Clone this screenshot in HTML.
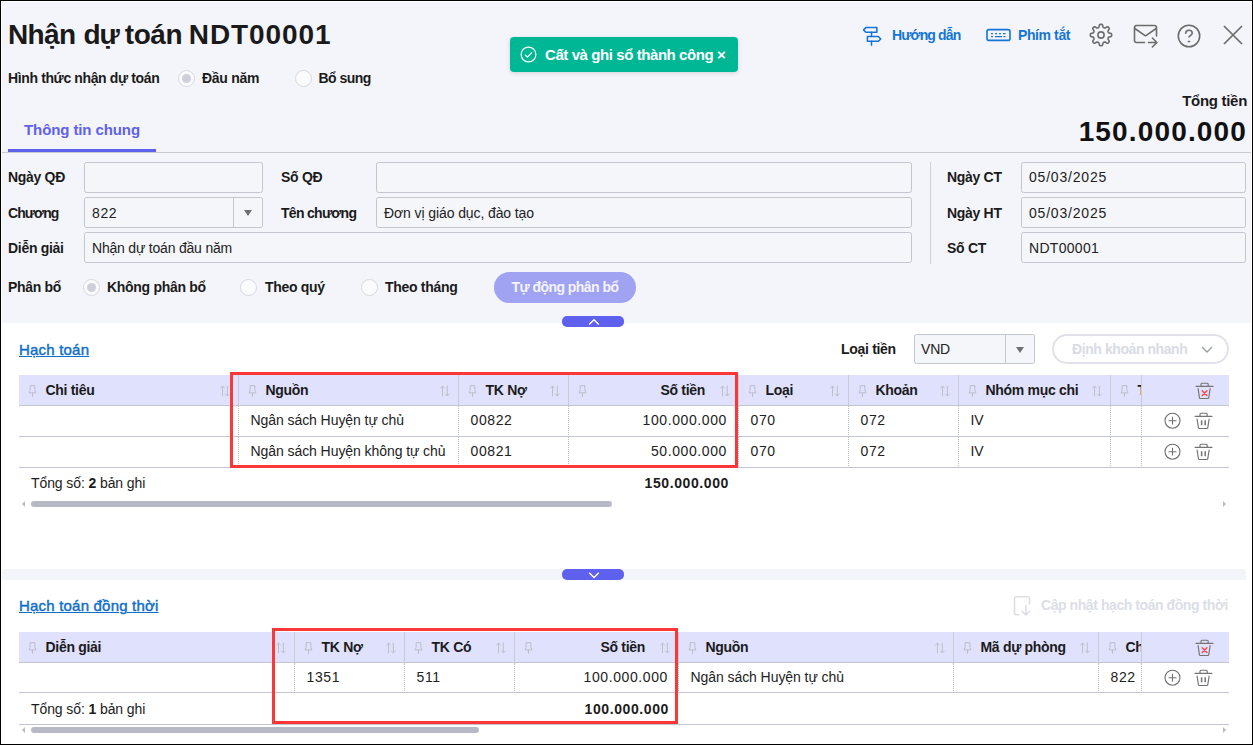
<!DOCTYPE html>
<html lang="vi">
<head>
<meta charset="utf-8">
<title>Nhận dự toán NDT00001</title>
<style>
*{box-sizing:border-box;margin:0;padding:0}
html,body{width:1253px;height:745px;overflow:hidden}
body{font-family:"Liberation Sans",sans-serif;font-size:14px;color:#1b1b1b;background:#fff;position:relative}
.abs{position:absolute}
#frame{position:absolute;left:0;top:0;width:1253px;height:745px;border:1px solid #000;z-index:50;pointer-events:none}
#top{position:absolute;left:2px;top:2px;width:1249px;height:321px;background:#f4f5fa}
.title{position:absolute;left:8px;top:18px;font-size:28px;font-weight:700;line-height:34px;color:#1a1a1a;white-space:nowrap;letter-spacing:-0.12px}
.lbl{position:absolute;font-weight:700;font-size:14px;line-height:18px;white-space:nowrap;color:#1b1b1b;letter-spacing:-.3px}
.radio{position:absolute;width:17px;height:17px;border-radius:50%;border:1px solid #d6d8e0;background:#fbfbfd}
.radio.on::after{content:"";position:absolute;left:3px;top:3px;width:9px;height:9px;border-radius:50%;background:#cdcfda}
.inp{position:absolute;height:31px;border:1px solid #c3c5cf;border-radius:2.500px;background:#f5f6fa;font-size:14px;line-height:29px;padding-left:7px;color:#222;white-space:nowrap;letter-spacing:-.2px}
.n{letter-spacing:.6px}
.tab{position:absolute;left:8px;top:119px;width:148px;height:33px;border-bottom:3px solid #5e60ee;color:#5e60ee;font-weight:700;font-size:15px;line-height:22px;text-align:center;letter-spacing:-.1px}
.title span{position:absolute;top:0}
.hline{position:absolute;left:2px;top:152px;width:1249px;height:1px;background:#c9cad3}
.link{position:absolute;color:#116fca;font-weight:400;-webkit-text-stroke:.45px #116fca;font-size:15px;text-decoration:underline;text-decoration-thickness:1.300px;text-underline-offset:1.200px;white-space:nowrap;line-height:20px;letter-spacing:.2px}
.handle{position:absolute;left:562px;width:62px;height:11px;background:#5e60ee;border-radius:5px}
.handle svg{position:absolute;left:26px;top:1.500px}
.strip{position:absolute;left:2px;top:569px;width:1244px;height:11px;background:#f4f5fa;border-radius:2px}
.grid{position:absolute;left:19px;width:1210px;overflow:hidden}
.hd{position:absolute;top:0;height:30px;background:#e0e1fd;border-right:1px solid #c9cad6;font-weight:700;font-size:14px;line-height:30px;white-space:nowrap;overflow:hidden;letter-spacing:-.3px}
.hd .pin{position:absolute;left:9px;top:9.500px}
.hd .srt{position:absolute;right:8px;top:10px}
.hd span.t{position:absolute;left:27px}
.hd span.r{position:absolute;right:33px}
.cell{position:absolute;height:31px;line-height:29px;font-size:14px;white-space:nowrap;padding-left:11.5px;border-right:1px dotted #b9bbc4;border-bottom:1px solid #c3c6d1;letter-spacing:-.07px;color:#222}
.cell.num{text-align:right;padding-right:11px}
.cell.n,.foot.n{letter-spacing:.6px}
.rowline{position:absolute;left:0;width:1210px;height:1px;background:#c3c6d1}
.foot{position:absolute;font-size:14px;line-height:30px;white-space:nowrap;letter-spacing:-.1px}
.sb{position:absolute;height:6px;border-radius:3px;background:#b7bac6}
.red{position:absolute;border:3px solid #fb3737;z-index:10}
.toast{position:absolute;left:510px;top:37px;width:228px;height:35px;background:#00b795;border-radius:4px;box-shadow:0 1px 4px rgba(0,0,0,.15);color:#fff;font-weight:700;font-size:15px;line-height:35px;white-space:nowrap;z-index:20}
.toast svg{position:absolute;left:10px;top:9px}
.toast span{position:absolute;left:35px;top:0;letter-spacing:-.42px}
.hlink{position:absolute;color:#1575d6;font-weight:700;font-size:14px;line-height:18px;white-space:nowrap;letter-spacing:-.4px}
.total{position:absolute;right:6px;top:115px;font-size:28px;font-weight:700;line-height:34px;letter-spacing:1.15px;color:#111;white-space:nowrap}
.dd{position:absolute;right:0;top:0;width:29px;height:100%;border-left:1px solid #c3c5cf}
.dd::after{content:"";position:absolute;left:9.500px;top:12px;border:4.500px solid transparent;border-top:6px solid #707070;border-bottom:0}
.btn{position:absolute;left:494px;top:272px;width:142px;height:31px;border-radius:16px;background:#a0a2f2;color:#f4f4ff;font-weight:700;font-size:14px;line-height:30px;text-align:center;letter-spacing:-.55px}
.pill{position:absolute;left:1052px;top:334px;width:177px;height:30px;border-radius:15px;border:2px solid #e1e2e9;background:#fff;color:#d9dbe3;font-weight:700;font-size:14px;line-height:26px;padding-left:18px;white-space:nowrap;letter-spacing:-.42px}
.pill svg{position:absolute;right:14px;top:10px}
.arrl{position:absolute;width:0;height:0;border:3px solid transparent;border-right:3.500px solid #b7bac6;border-left:0}
.arrr{position:absolute;width:0;height:0;border:3px solid transparent;border-left:3.500px solid #b7bac6;border-right:0}
</style>
</head>
<body>
<div id="frame"></div>
<div id="top"></div>
<div class="title"><span style="left:0;letter-spacing:-.67px">Nhận </span><span style="left:75.500px;letter-spacing:-1px">dự </span><span style="left:116.800px;letter-spacing:-.45px">toán </span><span style="left:180.800px;letter-spacing:.9px">NDT00001</span></div>
<div class="toast"><svg width="17" height="17" viewBox="0 0 17 17" fill="none" stroke="#fff" stroke-width="1.200"><circle cx="8.5" cy="8.5" r="7.400"/><path d="M5 8.800l2.400 2.300 4.600-4.800"/></svg><span>Cất và ghi sổ thành công ×</span></div>
<svg class="abs" style="left:862px;top:26px" width="20" height="21" viewBox="0 0 20 21" fill="none" stroke="#1274d6" stroke-width="1.500" stroke-linejoin="round" stroke-linecap="round"><path d="M1.600 3.900L3.900 1.600H14.900V6.200H3.900z"/><path d="M5.400 10.600H16.400L18.700 12.950L16.400 15.300H5.400z"/><path d="M9.500 6.200v4.400M9.500 15.300v4"/></svg>
<div class="hlink" style="left:892px;top:26px;letter-spacing:-.85px">Hướng dẫn</div>
<svg class="abs" style="left:986px;top:28px" width="25" height="14" viewBox="0 0 25 14" fill="none" stroke="#1575d6" stroke-width="1.600"><rect x="1" y="1.600" width="23" height="10.800" rx="2"/><path d="M5 5.600h2M9 5.600h2M13 5.600h2M17 5.600h2.500M5 8.600h2M9 8.600h7M17.500 8.600h2" stroke-width="1.400"/></svg>
<div class="hlink" style="left:1018px;top:26px">Phím tắt</div>
<svg class="abs" style="left:1089px;top:23px" width="24" height="24" viewBox="0 0 24 24" fill="none" stroke="#6c6c6c" stroke-width="1.600" stroke-linejoin="round"><circle cx="12" cy="12" r="3.100"/><path d="M12.00 1.30L12.56 1.34L13.10 1.50L13.58 2.05L13.86 3.26L14.10 4.17L14.43 4.52L14.80 4.71L15.17 4.87L15.57 5.00L16.05 4.98L16.87 4.50L17.92 3.85L18.65 3.79L19.15 4.06L19.57 4.43L19.94 4.85L20.21 5.35L20.15 6.08L19.50 7.13L19.02 7.95L19.00 8.43L19.13 8.83L19.29 9.20L19.48 9.57L19.83 9.90L20.74 10.14L21.95 10.42L22.50 10.90L22.66 11.44L22.70 12.00L22.66 12.56L22.50 13.10L21.95 13.58L20.74 13.86L19.83 14.10L19.48 14.43L19.29 14.80L19.13 15.17L19.00 15.57L19.02 16.05L19.50 16.87L20.15 17.92L20.21 18.65L19.94 19.15L19.57 19.57L19.15 19.94L18.65 20.21L17.92 20.15L16.87 19.50L16.05 19.02L15.57 19.00L15.17 19.13L14.80 19.29L14.43 19.48L14.10 19.83L13.86 20.74L13.58 21.95L13.10 22.50L12.56 22.66L12.00 22.70L11.44 22.66L10.90 22.50L10.42 21.95L10.14 20.74L9.90 19.83L9.57 19.48L9.20 19.29L8.83 19.13L8.43 19.00L7.95 19.02L7.13 19.50L6.08 20.15L5.35 20.21L4.85 19.94L4.43 19.57L4.06 19.15L3.79 18.65L3.85 17.92L4.50 16.87L4.98 16.05L5.00 15.57L4.87 15.17L4.71 14.80L4.52 14.43L4.17 14.10L3.26 13.86L2.05 13.58L1.50 13.10L1.34 12.56L1.30 12.00L1.34 11.44L1.50 10.90L2.05 10.42L3.26 10.14L4.17 9.90L4.52 9.57L4.71 9.20L4.87 8.83L5.00 8.43L4.98 7.95L4.50 7.13L3.85 6.08L3.79 5.35L4.06 4.85L4.43 4.43L4.85 4.06L5.35 3.79L6.08 3.85L7.13 4.50L7.95 4.98L8.43 5.00L8.83 4.87L9.20 4.71L9.57 4.52L9.90 4.17L10.14 3.26L10.42 2.05L10.90 1.50L11.44 1.34z"/></svg>
<svg class="abs" style="left:1132.600px;top:24px" width="26" height="24" viewBox="0 0 26 24" fill="none" stroke="#6c6c6c" stroke-width="1.600" stroke-linejoin="round" stroke-linecap="round"><path d="M11.500 18.500H3.500a2 2 0 0 1-2-2V3.500a2 2 0 0 1 2-2h18a2 2 0 0 1 2 2V12"/><path d="M1.800 4.500l10.700 7.300L23.200 4.500"/><path d="M15.500 18.500h8.300M19.400 14l4.500 4.500L19.400 23"/></svg>
<svg class="abs" style="left:1177px;top:24px" width="24" height="24" viewBox="0 0 24 24" fill="none" stroke="#6c6c6c" stroke-width="1.600" stroke-linecap="round"><circle cx="12" cy="12" r="10.700"/><path d="M8.700 9.300c0-1.800 1.500-3 3.300-3s3.200 1.100 3.200 2.800c0 2-2.300 2.500-3.200 3.800"/><path d="M11.300 17.600h1.400" stroke-width="1.500"/></svg>
<svg class="abs" style="left:1223px;top:25px" width="20" height="20" viewBox="0 0 20 20" fill="none" stroke="#6c6c6c" stroke-width="1.700"><path d="M1 1l18 18M19 1L1 19"/></svg>
<div class="lbl" style="left:8px;top:69px;letter-spacing:-.37px">Hình thức nhận dự toán</div>
<div class="radio on" style="left:178px;top:70px"></div>
<div class="lbl" style="left:202px;top:69px">Đầu năm</div>
<div class="radio" style="left:294.500px;top:70px"></div>
<div class="lbl" style="left:318.500px;top:69px;letter-spacing:-.55px">Bổ sung</div>
<div class="lbl" style="right:6px;top:92px;font-size:15px">Tổng tiền</div>
<div class="total">150.000.000</div>
<div class="tab">Thông tin chung</div><div class="hline"></div>
<div class="lbl" style="left:8px;top:168px">Ngày QĐ</div><div class="inp" style="left:84px;top:162px;width:179px"></div>
<div class="lbl" style="left:281px;top:168px">Số QĐ</div><div class="inp" style="left:376px;top:162px;width:536px"></div>
<div class="lbl" style="left:8px;top:204px;letter-spacing:-.9px">Chương</div><div class="inp n" style="left:84px;top:197px;padding-top:1px;width:179px">822<div class="dd"></div></div>
<div class="lbl" style="left:281px;top:204px;letter-spacing:-.7px">Tên chương</div><div class="inp" style="left:376px;top:197px;padding-top:1px;width:536px;letter-spacing:-.1px">Đơn vị giáo dục, đào tạo</div>
<div class="lbl" style="left:8px;top:239px">Diễn giải</div><div class="inp" style="left:84px;top:232px;padding-top:1px;width:828px">Nhận dự toán đầu năm</div>
<div class="abs" style="left:930px;top:162px;width:1px;height:102px;background:#cfd1d8"></div>
<div class="lbl" style="left:947px;top:168px">Ngày CT</div><div class="inp n" style="left:1021px;top:162px;width:225px;letter-spacing:.8px">05/03/2025</div>
<div class="lbl" style="left:947px;top:204px">Ngày HT</div><div class="inp n" style="left:1021px;top:197px;padding-top:1px;width:225px;letter-spacing:.8px">05/03/2025</div>
<div class="lbl" style="left:947px;top:239px">Số CT</div><div class="inp n" style="left:1021px;top:232px;padding-top:1px;width:225px;letter-spacing:.3px">NDT00001</div>
<div class="lbl" style="left:8px;top:278px">Phân bổ</div>
<div class="radio on" style="left:83px;top:279px"></div><div class="lbl" style="left:107px;top:278px">Không phân bổ</div>
<div class="radio" style="left:240px;top:279px"></div><div class="lbl" style="left:265px;top:278px">Theo quý</div>
<div class="radio" style="left:360.500px;top:279px"></div><div class="lbl" style="left:385px;top:278px">Theo tháng</div>
<div class="btn">Tự động phân bổ</div>
<div class="handle" style="top:316px"><svg width="12" height="8" viewBox="0 0 12 8" fill="none" stroke="#fff" stroke-width="1.400"><path d="M1.200 6.600L6 1.800l4.800 4.800"/></svg></div>
<div class="strip"></div>
<div class="handle" style="top:569px"><svg width="12" height="8" viewBox="0 0 12 8" fill="none" stroke="#fff" stroke-width="1.400"><path d="M1.200 1.800L6 6.600l4.800-4.800"/></svg></div>
<div class="link" style="left:19px;top:340px">Hạch toán</div>
<div class="lbl" style="left:841px;top:340px">Loại tiền</div>
<div class="inp" style="left:914px;top:334px;width:121px;height:30px;line-height:28px;padding-left:6px">VND<div class="dd"></div></div>
<div class="pill">Định khoản nhanh<svg width="12" height="7" viewBox="0 0 12 7" fill="none" stroke="#9a9ca6" stroke-width="1.300"><path d="M1 1l5 5 5-5"/></svg></div>
<div class="grid" style="top:375px;height:124px"><div class="hd" style="left:0px;width:220px"><svg class="pin" width="9" height="13" viewBox="0 0 9 13" fill="none" stroke="#bcbec8" stroke-width="1"><path d="M2.100 .7h4.800v4.700l1.100 2.500H1l1.100-2.500z"/><path d="M4.500 7.900v4"/></svg><span class="t" style="left:26.5px">Chi tiêu</span><svg class="srt" width="11" height="12" viewBox="0 0 11 12" fill="none" stroke="#bdbfca" stroke-width="1"><path d="M3.500 11.300V1M1.300 3.200L3.500 1l2.200 2.200"/><path d="M8.300 .700v10.300M6.100 8.800L8.300 11l2.200-2.200"/></svg></div><div class="hd" style="left:220px;width:220px"><svg class="pin" width="9" height="13" viewBox="0 0 9 13" fill="none" stroke="#bcbec8" stroke-width="1"><path d="M2.100 .7h4.800v4.700l1.100 2.500H1l1.100-2.500z"/><path d="M4.500 7.900v4"/></svg><span class="t" style="left:26.5px">Nguồn</span><svg class="srt" width="11" height="12" viewBox="0 0 11 12" fill="none" stroke="#bdbfca" stroke-width="1"><path d="M3.500 11.300V1M1.300 3.200L3.500 1l2.200 2.200"/><path d="M8.300 .700v10.300M6.100 8.800L8.300 11l2.200-2.200"/></svg></div><div class="hd" style="left:440px;width:110px"><svg class="pin" width="9" height="13" viewBox="0 0 9 13" fill="none" stroke="#bcbec8" stroke-width="1"><path d="M2.100 .7h4.800v4.700l1.100 2.500H1l1.100-2.500z"/><path d="M4.500 7.900v4"/></svg><span class="t" style="left:26.5px">TK Nợ</span><svg class="srt" width="11" height="12" viewBox="0 0 11 12" fill="none" stroke="#bdbfca" stroke-width="1"><path d="M3.500 11.300V1M1.300 3.200L3.500 1l2.200 2.200"/><path d="M8.300 .700v10.300M6.100 8.800L8.300 11l2.200-2.200"/></svg></div><div class="hd" style="left:550px;width:170px"><svg class="pin" width="9" height="13" viewBox="0 0 9 13" fill="none" stroke="#bcbec8" stroke-width="1"><path d="M2.100 .7h4.800v4.700l1.100 2.500H1l1.100-2.500z"/><path d="M4.500 7.900v4"/></svg><span class="r">Số tiền</span><svg class="srt" width="11" height="12" viewBox="0 0 11 12" fill="none" stroke="#bdbfca" stroke-width="1"><path d="M3.500 11.300V1M1.300 3.200L3.500 1l2.200 2.200"/><path d="M8.300 .700v10.300M6.100 8.800L8.300 11l2.200-2.200"/></svg></div><div class="hd" style="left:720px;width:110px"><svg class="pin" width="9" height="13" viewBox="0 0 9 13" fill="none" stroke="#bcbec8" stroke-width="1"><path d="M2.100 .7h4.800v4.700l1.100 2.500H1l1.100-2.500z"/><path d="M4.500 7.900v4"/></svg><span class="t" style="left:26.5px">Loại</span><svg class="srt" width="11" height="12" viewBox="0 0 11 12" fill="none" stroke="#bdbfca" stroke-width="1"><path d="M3.500 11.300V1M1.300 3.200L3.500 1l2.200 2.200"/><path d="M8.300 .700v10.300M6.100 8.800L8.300 11l2.200-2.200"/></svg></div><div class="hd" style="left:830px;width:110px"><svg class="pin" width="9" height="13" viewBox="0 0 9 13" fill="none" stroke="#bcbec8" stroke-width="1"><path d="M2.100 .7h4.800v4.700l1.100 2.500H1l1.100-2.500z"/><path d="M4.500 7.900v4"/></svg><span class="t" style="left:26.5px">Khoản</span><svg class="srt" width="11" height="12" viewBox="0 0 11 12" fill="none" stroke="#bdbfca" stroke-width="1"><path d="M3.500 11.300V1M1.300 3.200L3.500 1l2.200 2.200"/><path d="M8.300 .700v10.300M6.100 8.800L8.300 11l2.200-2.200"/></svg></div><div class="hd" style="left:940px;width:152px"><svg class="pin" width="9" height="13" viewBox="0 0 9 13" fill="none" stroke="#bcbec8" stroke-width="1"><path d="M2.100 .7h4.800v4.700l1.100 2.500H1l1.100-2.500z"/><path d="M4.500 7.900v4"/></svg><span class="t" style="left:26.5px">Nhóm mục chi</span><svg class="srt" width="11" height="12" viewBox="0 0 11 12" fill="none" stroke="#bdbfca" stroke-width="1"><path d="M3.500 11.300V1M1.300 3.200L3.500 1l2.200 2.200"/><path d="M8.300 .700v10.300M6.100 8.800L8.300 11l2.200-2.200"/></svg></div><div class="hd" style="left:1092px;width:31px"><svg class="pin" width="9" height="13" viewBox="0 0 9 13" fill="none" stroke="#bcbec8" stroke-width="1"><path d="M2.100 .7h4.800v4.700l1.100 2.500H1l1.100-2.500z"/><path d="M4.500 7.900v4"/></svg><span class="t" style="left:26.5px">T</span></div><div class="hd" style="left:1123px;width:87px;border-right:0"></div><svg class="abs" style="left:1176px;top:7.2px" width="19" height="18" viewBox="0 0 19 18" fill="none" stroke="#747474" stroke-width="1.150" stroke-linecap="round"><path d="M1 4.300H18"/><path d="M6 4.300V2.200a1 1 0 0 1 1-1h5.200a1 1 0 0 1 1 1v2.100"/><path d="M3.100 6.500l1.300 9.100a1 1 0 0 0 1 .9h7.400a1 1 0 0 0 1-.9l1.300-9.100"/><path d="M7.200 8.800l4.700 4.700M11.900 8.800l-4.700 4.700" stroke="#ff4a4d" stroke-width="1.500"/></svg><div class="cell" style="left:0px;top:31px;width:220px;"></div><div class="cell" style="left:220px;top:31px;width:220px;">Ngân sách Huyện tự chủ</div><div class="cell n" style="left:440px;top:31px;width:110px;">00822</div><div class="cell num n" style="left:550px;top:31px;width:170px;">100.000.000</div><div class="cell n" style="left:720px;top:31px;width:110px;">070</div><div class="cell n" style="left:830px;top:31px;width:110px;">072</div><div class="cell" style="left:940px;top:31px;width:152px;">IV</div><div class="cell" style="left:1092px;top:31px;width:31px;"></div><div class="cell" style="left:1123px;top:31px;width:87px;border-right:0"></div><svg class="abs" style="left:1145.2px;top:37px" width="17" height="17" viewBox="0 0 17 17" fill="none" stroke="#707070" stroke-width="1.100"><circle cx="8.5" cy="8.700" r="7.500"/><path d="M8.500 4.800v7.800M4.600 8.700h7.800"/></svg><svg class="abs" style="left:1175px;top:37px" width="19" height="18" viewBox="0 0 19 18" fill="none" stroke="#747474" stroke-width="1.150" stroke-linecap="round"><path d="M1 4.300H18"/><path d="M6 4.300V2.200a1 1 0 0 1 1-1h5.200a1 1 0 0 1 1 1v2.100"/><path d="M3.100 7.100l1.300 8.500a1 1 0 0 0 1 .9h7.400a1 1 0 0 0 1-.9l1.300-8.500"/><path d="M7.600 8.300v5M11.200 8.300v5" stroke-width="1.500" stroke-linecap="butt"/></svg><div class="cell" style="left:0px;top:62px;width:220px;"></div><div class="cell" style="left:220px;top:62px;width:220px;">Ngân sách Huyện không tự chủ</div><div class="cell n" style="left:440px;top:62px;width:110px;">00821</div><div class="cell num n" style="left:550px;top:62px;width:170px;">50.000.000</div><div class="cell n" style="left:720px;top:62px;width:110px;">070</div><div class="cell n" style="left:830px;top:62px;width:110px;">072</div><div class="cell" style="left:940px;top:62px;width:152px;">IV</div><div class="cell" style="left:1092px;top:62px;width:31px;"></div><div class="cell" style="left:1123px;top:62px;width:87px;border-right:0"></div><svg class="abs" style="left:1145.2px;top:68px" width="17" height="17" viewBox="0 0 17 17" fill="none" stroke="#707070" stroke-width="1.100"><circle cx="8.5" cy="8.700" r="7.500"/><path d="M8.500 4.800v7.800M4.600 8.700h7.800"/></svg><svg class="abs" style="left:1175px;top:68px" width="19" height="18" viewBox="0 0 19 18" fill="none" stroke="#747474" stroke-width="1.150" stroke-linecap="round"><path d="M1 4.300H18"/><path d="M6 4.300V2.200a1 1 0 0 1 1-1h5.200a1 1 0 0 1 1 1v2.100"/><path d="M3.100 7.100l1.300 8.500a1 1 0 0 0 1 .9h7.400a1 1 0 0 0 1-.9l1.300-8.500"/><path d="M7.600 8.300v5M11.200 8.300v5" stroke-width="1.500" stroke-linecap="butt"/></svg><div class="rowline" style="top:30px"></div><div class="foot" style="left:12px;top:93px">Tổng số: <b>2</b> bản ghi</div><div class="foot n" style="right:500px;top:93px;font-weight:700">150.000.000</div></div>
<div class="sb" style="left:31px;top:501px;width:581px"></div>
<div class="arrl" style="left:22px;top:501px"></div><div class="arrr" style="left:1223px;top:501px"></div>
<div class="red" style="left:230px;top:372px;width:508px;height:96px"></div>
<div class="link" style="left:19px;top:596px">Hạch toán đồng thời</div>
<svg class="abs" style="left:1013px;top:595px" width="18" height="21" viewBox="0 0 18 21" fill="none" stroke="#dcdee6" stroke-width="1.600" stroke-linecap="round" stroke-linejoin="round"><path d="M6 19.700H3.500a2 2 0 0 1-2-2V3.800a2 2 0 0 1 2-2h11a2 2 0 0 1 2 2V9"/><path d="M12.900 10.700v9M9.200 16.300l3.700 3.700 3.700-3.700"/></svg>
<div class="lbl" style="left:1041px;top:596px;color:#dcdee6;letter-spacing:-.43px">Cập nhật hạch toán đồng thời</div>
<div class="grid" style="top:632px;height:93px"><div class="hd" style="left:0px;width:276px"><svg class="pin" width="9" height="13" viewBox="0 0 9 13" fill="none" stroke="#bcbec8" stroke-width="1"><path d="M2.100 .7h4.800v4.700l1.100 2.500H1l1.100-2.500z"/><path d="M4.500 7.900v4"/></svg><span class="t" style="left:26.5px">Diễn giải</span><svg class="srt" width="11" height="12" viewBox="0 0 11 12" fill="none" stroke="#bdbfca" stroke-width="1"><path d="M3.500 11.300V1M1.300 3.200L3.500 1l2.200 2.200"/><path d="M8.300 .700v10.300M6.100 8.800L8.300 11l2.200-2.200"/></svg></div><div class="hd" style="left:276px;width:110px"><svg class="pin" width="9" height="13" viewBox="0 0 9 13" fill="none" stroke="#bcbec8" stroke-width="1"><path d="M2.100 .7h4.800v4.700l1.100 2.500H1l1.100-2.500z"/><path d="M4.500 7.900v4"/></svg><span class="t" style="left:26.5px">TK Nợ</span><svg class="srt" width="11" height="12" viewBox="0 0 11 12" fill="none" stroke="#bdbfca" stroke-width="1"><path d="M3.500 11.300V1M1.300 3.200L3.500 1l2.200 2.200"/><path d="M8.300 .700v10.300M6.100 8.800L8.300 11l2.200-2.200"/></svg></div><div class="hd" style="left:386px;width:110px"><svg class="pin" width="9" height="13" viewBox="0 0 9 13" fill="none" stroke="#bcbec8" stroke-width="1"><path d="M2.100 .7h4.800v4.700l1.100 2.500H1l1.100-2.500z"/><path d="M4.500 7.900v4"/></svg><span class="t" style="left:26.5px">TK Có</span><svg class="srt" width="11" height="12" viewBox="0 0 11 12" fill="none" stroke="#bdbfca" stroke-width="1"><path d="M3.500 11.300V1M1.300 3.200L3.500 1l2.200 2.200"/><path d="M8.300 .700v10.300M6.100 8.800L8.300 11l2.200-2.200"/></svg></div><div class="hd" style="left:496px;width:164px"><svg class="pin" width="9" height="13" viewBox="0 0 9 13" fill="none" stroke="#bcbec8" stroke-width="1"><path d="M2.100 .7h4.800v4.700l1.100 2.500H1l1.100-2.500z"/><path d="M4.500 7.900v4"/></svg><span class="r">Số tiền</span><svg class="srt" width="11" height="12" viewBox="0 0 11 12" fill="none" stroke="#bdbfca" stroke-width="1"><path d="M3.500 11.300V1M1.300 3.200L3.500 1l2.200 2.200"/><path d="M8.300 .700v10.300M6.100 8.800L8.300 11l2.200-2.200"/></svg></div><div class="hd" style="left:660px;width:275px"><svg class="pin" width="9" height="13" viewBox="0 0 9 13" fill="none" stroke="#bcbec8" stroke-width="1"><path d="M2.100 .7h4.800v4.700l1.100 2.500H1l1.100-2.500z"/><path d="M4.500 7.900v4"/></svg><span class="t" style="left:26.5px">Nguồn</span><svg class="srt" width="11" height="12" viewBox="0 0 11 12" fill="none" stroke="#bdbfca" stroke-width="1"><path d="M3.500 11.300V1M1.300 3.200L3.500 1l2.200 2.200"/><path d="M8.300 .700v10.300M6.100 8.800L8.300 11l2.200-2.200"/></svg></div><div class="hd" style="left:935px;width:145px"><svg class="pin" width="9" height="13" viewBox="0 0 9 13" fill="none" stroke="#bcbec8" stroke-width="1"><path d="M2.100 .7h4.800v4.700l1.100 2.500H1l1.100-2.500z"/><path d="M4.500 7.900v4"/></svg><span class="t" style="left:26.5px">Mã dự phòng</span><svg class="srt" width="11" height="12" viewBox="0 0 11 12" fill="none" stroke="#bdbfca" stroke-width="1"><path d="M3.500 11.300V1M1.300 3.200L3.500 1l2.200 2.200"/><path d="M8.300 .700v10.300M6.100 8.800L8.300 11l2.200-2.200"/></svg></div><div class="hd" style="left:1080px;width:43px"><svg class="pin" width="9" height="13" viewBox="0 0 9 13" fill="none" stroke="#bcbec8" stroke-width="1"><path d="M2.100 .7h4.800v4.700l1.100 2.500H1l1.100-2.500z"/><path d="M4.500 7.900v4"/></svg><span class="t" style="left:26.5px">Ch</span></div><div class="hd" style="left:1123px;width:87px;border-right:0"></div><svg class="abs" style="left:1176px;top:7.2px" width="19" height="18" viewBox="0 0 19 18" fill="none" stroke="#747474" stroke-width="1.150" stroke-linecap="round"><path d="M1 4.300H18"/><path d="M6 4.300V2.200a1 1 0 0 1 1-1h5.200a1 1 0 0 1 1 1v2.100"/><path d="M3.100 6.500l1.300 9.100a1 1 0 0 0 1 .9h7.400a1 1 0 0 0 1-.9l1.300-9.100"/><path d="M7.200 8.800l4.700 4.700M11.900 8.800l-4.700 4.700" stroke="#ff4a4d" stroke-width="1.500"/></svg><div class="cell" style="left:0px;top:31px;width:276px;height:30px;"></div><div class="cell n" style="left:276px;top:31px;width:110px;height:30px;">1351</div><div class="cell n" style="left:386px;top:31px;width:110px;height:30px;">511</div><div class="cell num n" style="left:496px;top:31px;width:164px;height:30px;padding-right:10px">100.000.000</div><div class="cell" style="left:660px;top:31px;width:275px;height:30px;">Ngân sách Huyện tự chủ</div><div class="cell" style="left:935px;top:31px;width:145px;height:30px;"></div><div class="cell n" style="left:1080px;top:31px;width:43px;height:30px;">822</div><div class="cell" style="left:1123px;top:31px;width:87px;border-right:0;height:30px"></div><svg class="abs" style="left:1145.2px;top:37px" width="17" height="17" viewBox="0 0 17 17" fill="none" stroke="#707070" stroke-width="1.100"><circle cx="8.5" cy="8.700" r="7.500"/><path d="M8.500 4.800v7.800M4.600 8.700h7.800"/></svg><svg class="abs" style="left:1175px;top:37px" width="19" height="18" viewBox="0 0 19 18" fill="none" stroke="#747474" stroke-width="1.150" stroke-linecap="round"><path d="M1 4.300H18"/><path d="M6 4.300V2.200a1 1 0 0 1 1-1h5.200a1 1 0 0 1 1 1v2.100"/><path d="M3.100 7.100l1.300 8.500a1 1 0 0 0 1 .9h7.400a1 1 0 0 0 1-.9l1.300-8.500"/><path d="M7.600 8.300v5M11.200 8.300v5" stroke-width="1.500" stroke-linecap="butt"/></svg><div class="rowline" style="top:30px"></div><div class="rowline" style="top:92px"></div><div class="foot" style="left:12px;top:62px">Tổng số: <b>1</b> bản ghi</div><div class="foot n" style="right:560px;top:62px;font-weight:700">100.000.000</div></div>
<div class="sb" style="left:31px;top:727px;width:448px"></div>
<div class="arrl" style="left:22px;top:727px"></div><div class="arrr" style="left:1223px;top:727px"></div>
<div class="red" style="left:272px;top:628px;width:406px;height:96px"></div>
</body>
</html>
